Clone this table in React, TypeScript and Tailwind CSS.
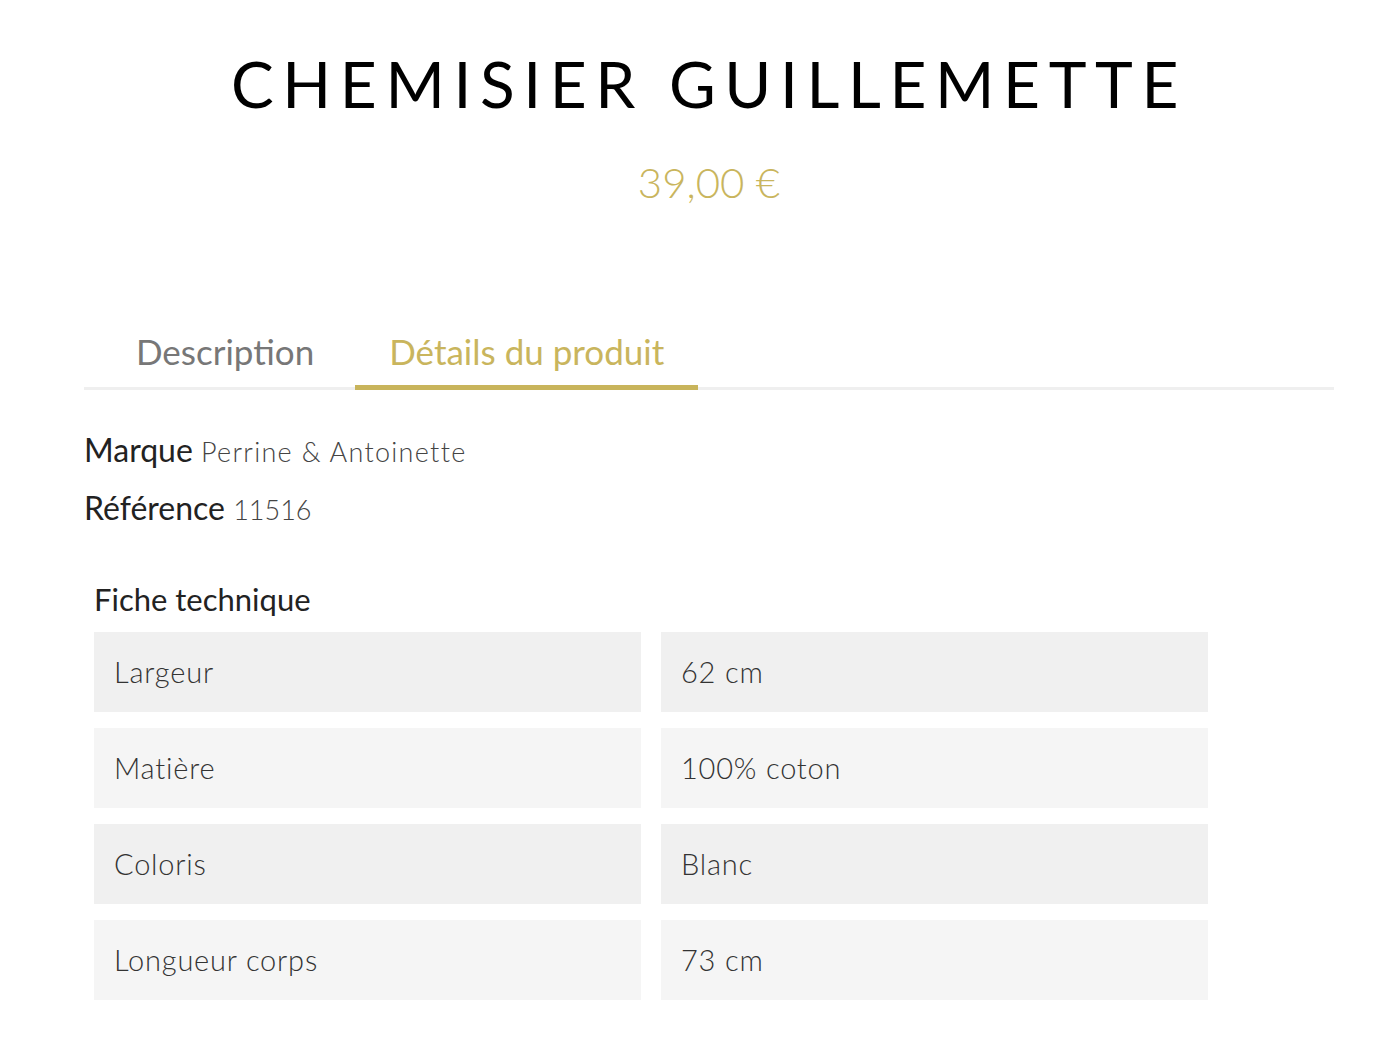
import React, { useState } from "react";

const specs = [
  { label: "Largeur", value: "62 cm" },
  { label: "Matière", value: "100% coton" },
  { label: "Coloris", value: "Blanc" },
  { label: "Longueur corps", value: "73 cm" },
];

export default function App() {
  const [tab, setTab] = useState<"description" | "details">("details");

  return (
    <div className="min-h-[1050px] bg-white font-['Lato','Liberation_Sans',sans-serif]">
      <div className="ml-[84px] w-[1250px]">
        {/* Product header */}
        <h1 className="pt-[46px] text-center text-[64px] leading-[76px] font-normal tracking-[8.6px] text-black">
          CHEMISIER GUILLEMETTE
        </h1>
        <div className="mt-[32px] text-center text-[42px] leading-[56px] font-light text-[#c9b55d]">39,00 €</div>

        {/* Tabs */}
        <div className="mt-[121px] flex border-b-[3px] border-[#efefef] pl-[18px]">
          <button
            type="button"
            onClick={() => setTab("description")}
            className={`-mb-[3px] px-[34px] pb-[14px] text-[35px] leading-[40px] border-b-[5px] ${
              tab === "description" ? "border-[#c8b45b] text-[#c9b55d]" : "border-transparent text-[#777]"
            }`}
          >
            Description
          </button>
          <button
            type="button"
            onClick={() => setTab("details")}
            className={`-mb-[3px] ml-[7px] px-[34px] pb-[14px] text-[35px] leading-[40px] border-b-[5px] ${
              tab === "details" ? "border-[#c8b45b] text-[#c9b55d]" : "border-transparent text-[#777]"
            }`}
          >
            Détails du produit
          </button>
        </div>

        {tab === "details" ? (
          <div>
            <div className="mt-[39px] space-y-[14px] text-[#222]">
              <div className="text-[32px] leading-[42px]">
                Marque <span className="text-[27px] font-light tracking-[1.3px] text-[#444]">Perrine &amp; Antoinette</span>
              </div>
              <div className="text-[32px] leading-[42px]">
                Référence <span className="text-[27px] font-light text-[#444]">11516</span>
              </div>
            </div>

            <div className="ml-[10px] mt-[48px] w-[1114px]">
              <div className="text-[31px] leading-[40px] text-[#222]">Fiche technique</div>
              <div className="mt-[13px] grid grid-cols-2 gap-x-[20px] gap-y-[16px]">
                {specs.map((s, i) => (
                  <React.Fragment key={s.label}>
                    <div
                      className={`flex h-[80px] items-center px-[20px] text-[29px] font-light tracking-[0.8px] text-[#333] ${
                        i % 2 === 0 ? "bg-[#f0f0f0]" : "bg-[#f5f5f5]"
                      }`}
                    >
                      {s.label}
                    </div>
                    <div
                      className={`flex h-[80px] items-center px-[20px] text-[29px] font-light tracking-[0.8px] text-[#333] ${
                        i % 2 === 0 ? "bg-[#f0f0f0]" : "bg-[#f5f5f5]"
                      }`}
                    >
                      {s.value}
                    </div>
                  </React.Fragment>
                ))}
              </div>
            </div>
          </div>
        ) : (
          <div className="mt-[39px] text-[28px] font-light text-[#444]">Description</div>
        )}
      </div>
    </div>
  );
}
